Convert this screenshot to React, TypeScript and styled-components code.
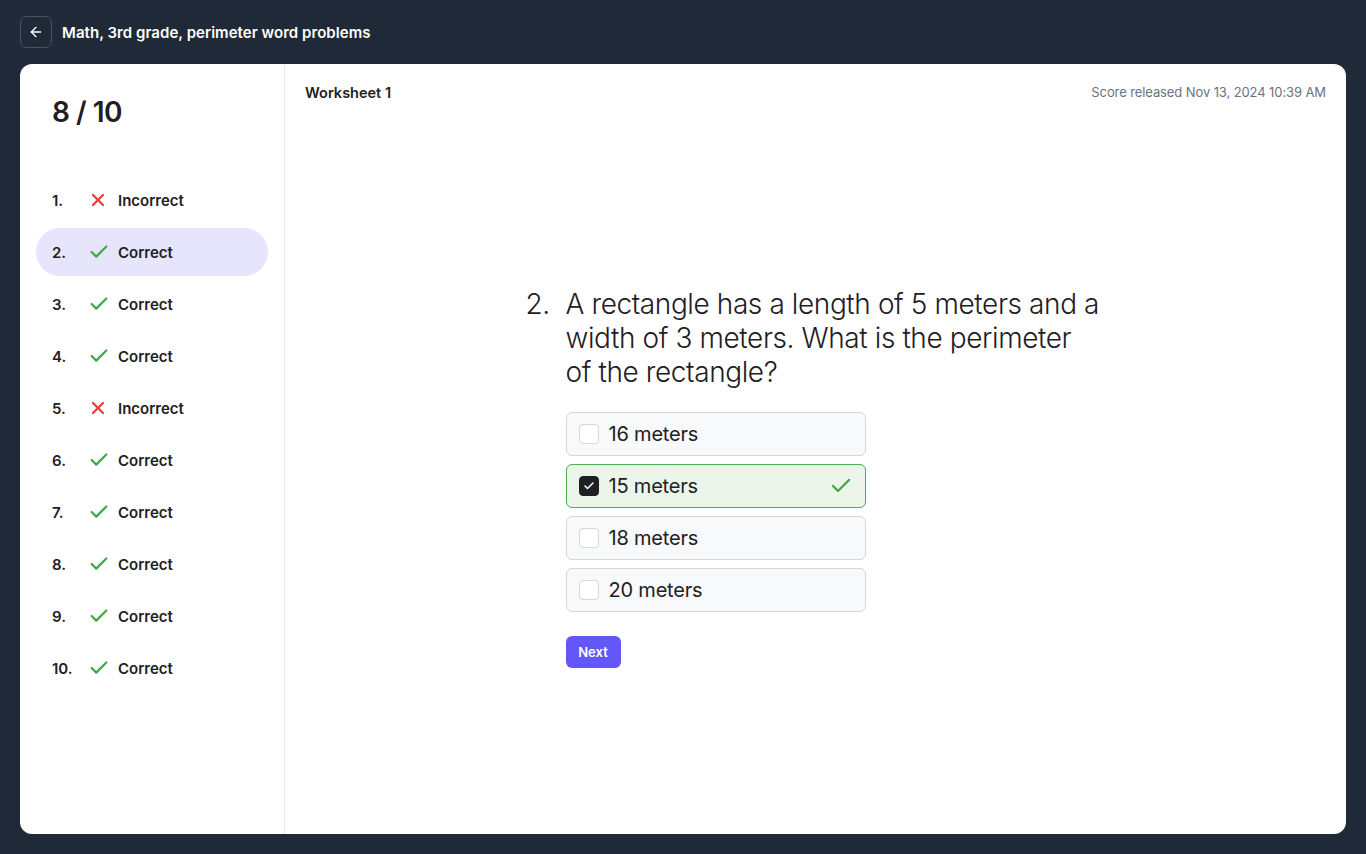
import React from "react";
import styled, { createGlobalStyle } from "styled-components";
import { ArrowLeft, Check, X } from "lucide-react";

const Global = createGlobalStyle`
  html, body { margin: 0; padding: 0; background: #1f2937; }
  body { font-family: Inter, "Noto Sans", sans-serif; -webkit-font-smoothing: antialiased; }
  * { box-sizing: border-box; }
`;

const Page = styled.div`
  width: 1366px;
  height: 854px;
  background: #1f2937;
  display: flex;
  flex-direction: column;
  padding: 16px 20px 20px;
`;

const TopBar = styled.div`
  display: flex;
  align-items: center;
  gap: 10px;
  height: 32px;
  margin-bottom: 16px;
`;

const BackButton = styled.button`
  width: 32px;
  height: 32px;
  border-radius: 7px;
  border: 1px solid #4b5563;
  background: transparent;
  color: #ffffff;
  display: flex;
  align-items: center;
  justify-content: center;
  padding: 0;
`;

const Title = styled.h1`
  margin: 0;
  font-size: 15px;
  font-weight: 600;
  color: #ffffff;
  letter-spacing: 0.05px;
`;

const Card = styled.div`
  flex: 1;
  background: #ffffff;
  border-radius: 12px;
  display: flex;
  overflow: hidden;
`;

const Sidebar = styled.aside`
  width: 265px;
  border-right: 1px solid #e5e7eb;
  padding: 28px 16px 0;
  display: flex;
  flex-direction: column;
`;

const Score = styled.div`
  font-size: 28px;
  font-weight: 600;
  color: #1f2023;
  padding-left: 16px;
  height: 40px;
  line-height: 40px;
  margin-bottom: 44px;
  letter-spacing: -0.5px;
`;

const List = styled.ul`
  list-style: none;
  margin: 0;
  padding: 0;
  display: flex;
  flex-direction: column;
  gap: 4px;
`;

const Item = styled.li<{ $active?: boolean }>`
  height: 48px;
  border-radius: 24px;
  background: ${(p) => (p.$active ? "#e6e5fc" : "transparent")};
  display: flex;
  align-items: center;
  padding-left: 16px;
  font-size: 15px;
  font-weight: 600;
  color: #1f2023;
`;

const Num = styled.span`
  width: 36px;
`;

const IconWrap = styled.span`
  width: 30px;
  display: flex;
  align-items: center;
`;

const Main = styled.main`
  flex: 1;
  display: flex;
  flex-direction: column;
  padding: 20px 20px 0;
`;

const MainHeader = styled.div`
  display: flex;
  justify-content: space-between;
  align-items: center;
  height: 16px;
`;

const Worksheet = styled.div`
  font-size: 14.5px;
  font-weight: 600;
  color: #1f2023;
`;

const Released = styled.div`
  font-size: 13px;
  color: #6b7280;
  letter-spacing: -0.1px;
`;

const Center = styled.div`
  flex: 1;
  display: flex;
  align-items: center;
  justify-content: center;
  padding-top: 20px;
`;

const QBlock = styled.div`
  width: 580px;
  display: flex;
  flex-direction: column;
`;

const Question = styled.div`
  display: flex;
  font-size: 28px;
  font-weight: 300;
  line-height: 34px;
  color: #1f2023;
  letter-spacing: -0.4px;
  margin-bottom: 23px;
`;

const QNum = styled.span`
  width: 40px;
`;

const QText = styled.span`
  width: 535px;
`;

const Options = styled.div`
  margin-left: 40px;
  width: 300px;
  display: flex;
  flex-direction: column;
  gap: 8px;
`;

const Option = styled.div<{ $correct?: boolean }>`
  height: 44px;
  border-radius: 6px;
  border: 1px solid ${(p) => (p.$correct ? "#4caf50" : "#d4d6dc")};
  background: ${(p) => (p.$correct ? "#ebf5ea" : "#f8f9fb")};
  display: flex;
  align-items: center;
  padding: 0 12px 0 12px;
  font-size: 20px;
  color: #1f2023;
  letter-spacing: -0.2px;
`;

const Box = styled.span<{ $checked?: boolean }>`
  width: 20px;
  height: 20px;
  border-radius: 4px;
  border: 1px solid ${(p) => (p.$checked ? "#1f2023" : "#d4d6dc")};
  background: ${(p) => (p.$checked ? "#1f2023" : "#ffffff")};
  display: flex;
  align-items: center;
  justify-content: center;
  margin-right: 10px;
  color: #fff;
`;

const OptText = styled.span`
  flex: 1;
`;

const NextButton = styled.button`
  margin-top: 24px;
  margin-left: 40px;
  width: 55px;
  height: 32px;
  border: none;
  border-radius: 6px;
  background: #6457f9;
  color: #fff;
  font-family: inherit;
  font-size: 13px;
  font-weight: 600;
`;

const results = [false, true, true, true, false, true, true, true, true, true];
const options = ["16 meters", "15 meters", "18 meters", "20 meters"];

export default function App() {
  return (
    <>
      <Global />
      <Page>
        <TopBar>
          <BackButton aria-label="Back">
            <ArrowLeft size={16} strokeWidth={2} />
          </BackButton>
          <Title>Math, 3rd grade, perimeter word problems</Title>
        </TopBar>
        <Card>
          <Sidebar>
            <Score>8 / 10</Score>
            <List>
              {results.map((ok, i) => (
                <Item key={i} $active={i === 1}>
                  <Num>{i + 1}.</Num>
                  <IconWrap>
                    {ok ? (
                      <Check size={22} strokeWidth={2.5} color="#45a849" />
                    ) : (
                      <X size={20} strokeWidth={2.6} color="#ef3b36" />
                    )}
                  </IconWrap>
                  {ok ? "Correct" : "Incorrect"}
                </Item>
              ))}
            </List>
          </Sidebar>
          <Main>
            <MainHeader>
              <Worksheet>Worksheet 1</Worksheet>
              <Released>Score released Nov 13, 2024 10:39 AM</Released>
            </MainHeader>
            <Center>
              <QBlock>
                <Question>
                  <QNum>2.</QNum>
                  <QText>
                    A rectangle has a length of 5 meters and a width of 3 meters. What is the perimeter of the rectangle?
                  </QText>
                </Question>
                <Options>
                  {options.map((o, i) => (
                    <Option key={o} $correct={i === 1}>
                      <Box $checked={i === 1}>
                        {i === 1 && <Check size={12} strokeWidth={3} />}
                      </Box>
                      <OptText>{o}</OptText>
                      {i === 1 && <Check size={24} strokeWidth={2.4} color="#45a849" />}
                    </Option>
                  ))}
                </Options>
                <NextButton>Next</NextButton>
              </QBlock>
            </Center>
          </Main>
        </Card>
      </Page>
    </>
  );
}
